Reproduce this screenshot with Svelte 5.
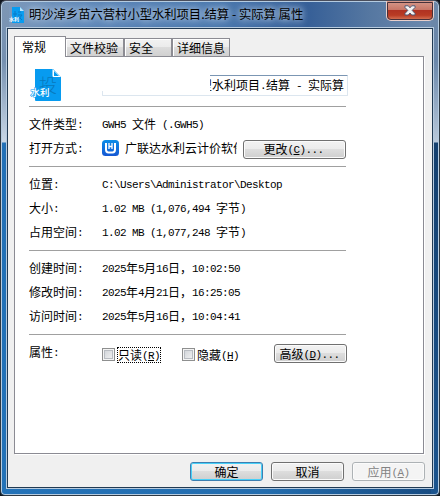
<script>
  const tabs = ['常规', '文件校验', '安全', '详细信息'];
  const location = [
    ['位置:', 'C:\\Users\\Administrator\\Desktop'],
    ['大小:', '1.02 MB (1,076,494 字节)'],
    ['占用空间:', '1.02 MB (1,077,248 字节)']
  ];
  const times = [
    ['创建时间:', '2025年5月16日，10:02:50'],
    ['修改时间:', '2025年4月21日，16:25:05'],
    ['访问时间:', '2025年5月16日，10:04:41']
  ];
  const runs = (s) => s.match(/[\x20-\x7e]+|[^\x20-\x7e]+/g) ?? [];
</script>

{#snippet mixed(s)}{#each runs(s) as r}{#if r.charCodeAt(0) < 127}<span class="half">{r}</span>{:else}{r}{/if}{/each}{/snippet}
{#snippet key(k)}<span class="half">(<u>{k}</u>)</span>{/snippet}

<div class="window">
  <header>
    <svg class="appicon" width="16" height="18" viewBox="0 0 16 18">
      <path d="M3 1h8l4 4v12H3z" fill="#079cf0" />
      <path d="M11 1v4h4z" fill="#b9e5ff" />
      <path d="M6 5v8M4 8h4M9 6h3M9 9h4l-4 5M9 10l4 4" stroke="#087ac7" fill="none" />
      <text x="0" y="14.500" font-size="5" font-weight="700" fill="#fff">水利</text>
    </svg>
    <span class="title">明沙淖乡苗六营村小型水利项目.结算 - 实际算 属性</span>
    <button class="close" aria-label="关闭">
      <svg width="12" height="11" viewBox="0 0 12 11">
        <path d="M1 .8h3.3L6 2.8 7.7.8H11v1.7L8.2 5.4 11 8.4V10H7.7L6 8 4.3 10H1V8.4l2.8-3L1 2.5z" fill="#f4f4f4" stroke="#525875" />
      </svg>
    </button>
  </header>

  <main>
    <nav>
      {#each tabs as t, i}
        <button class="tab t{i}" class:active={i === 0}>{t}</button>
      {/each}
    </nav>
    <section class="panel">
      <div class="head">
        <svg width="32" height="32" viewBox="0 0 32 32">
          <path d="M5 0h18l8 8v23q0 1-1 1H6q-1 0-1-1z" fill="#079bf0" />
          <path d="M22.500 0v7q0 1 1 1H31z" fill="#fff" />
          <path d="M24 2v5h5z" fill="#079bf0" />
          <text x="9" y="22.500" font-size="18" font-weight="300" fill="#0879bd">投</text>
          <text x="0.500" y="26.500" font-size="9.500" font-weight="500" fill="#fff" stroke="#079bf0" stroke-width="1.200" paint-order="stroke">水利</text>
        </svg>
        <div class="name">
          <span>{@render mixed('型水利项目.结算 - 实际算')}</span>
          <i></i>
        </div>
      </div>

      <div class="group">
        <div class="row"><label>{@render mixed('文件类型:')}</label><span>{@render mixed('GWH5 文件 (.GWH5)')}</span></div>
        <div class="row">
          <label>{@render mixed('打开方式:')}</label>
          <svg class="wicon" width="17" height="16" viewBox="0 0 17 16">
            <defs><linearGradient id="g" x2="0" y2="1"><stop stop-color="#0b8de8" /><stop offset="1" stop-color="#1457d3" /></linearGradient></defs>
            <rect width="17" height="16" rx="3.500" fill="url(#g)" />
            <path d="M4 3v6.500q0 3 2.500 3h4q2.500 0 2.500-3V3" fill="none" stroke="#fff" stroke-width="2" />
            <path d="M7 3v6M10 3v6M7 6.500h3" fill="none" stroke="#fff" stroke-width="1.300" />
          </svg>
          <span class="opener">广联达水利云计价软件</span>
          <button class="btn change">更改{@render key('C')}<span class="half">...</span></button>
        </div>
      </div>

      {#each [location, times] as group}
        <div class="group">
          {#each group as [l, v]}
            <div class="row"><label>{@render mixed(l)}</label><span>{@render mixed(v)}</span></div>
          {/each}
        </div>
      {/each}

      <div class="group attrs">
        <label>{@render mixed('属性:')}</label>
        <span class="box"></span>
        <span class="opt focus">只读{@render key('R')}</span>
        <span class="box second"></span>
        <span class="opt">隐藏{@render key('H')}</span>
        <button class="btn adv">高级{@render key('D')}<span class="half">...</span></button>
      </div>
    </section>
    <footer>
      <button class="btn default">确定</button>
      <button class="btn">取消</button>
      <button class="btn disabled">应用{@render key('A')}</button>
    </footer>
  </main>
</div>

<style>
  :global(body) { background: #10161e; }
  * { box-sizing: border-box; }
  .window {
    width: 440px; height: 496px; overflow: hidden;
    display: flex; flex-direction: column;
    border: 1px solid #2d3843; border-top-color: #4a4e5c; border-radius: 6px 6px 5px 5px;
    box-shadow: inset 0 0 0 1px #b5cbe0;
    font: 12px/16px "Noto Sans CJK SC", sans-serif; color: #000;
    background:
      linear-gradient(180deg, #7d97b5 0, #7590b0 60px, #c9d7e6 141px, #2270b6 142px, #2372b8 100%) left / 8px 100% no-repeat,
      linear-gradient(180deg, #6c87a8 0, #6a87aa 60px, #b8c8da 141px, #14406f 142px, #1b548e 100%) right / 8px 100% no-repeat,
      linear-gradient(90deg, #7f9abb 0, #5f88b8 20%, #4b78ae 50%, #365f97 70%, #5577a1 84%, #708caf 100%) top / 100% 30px no-repeat,
      linear-gradient(90deg, #2372b8, #236dae 60%, #174a80);
  }
  button { font: inherit; color: inherit; margin: 0; padding: 0; }
  .half {
    font-family: "Liberation Mono", monospace; font-size: 11px; line-height: 1;
    letter-spacing: -.6px; white-space: pre; vertical-align: .6px;
  }
  header { height: 27px; flex: none; display: flex; align-items: flex-start; padding-left: 8px; }
  .appicon { margin: 5px 4px 0 0; }
  .title {
    flex: 1; margin-top: 5px; white-space: nowrap; font-size: 12.300px;
    text-shadow: 0 0 6px #c3d5e9, 0 0 9px #bdd0e5;
  }
  .close {
    width: 48px; height: 20px; margin-right: 5px; display: flex; justify-content: center; align-items: center;
    border: 1px solid #e8cfcb; border-top: 0; border-radius: 0 0 5px 5px;
    outline: 1px solid #47303a; outline-offset: -2px;
    background: linear-gradient(#d79a8c 0, #c87768 45%, #b03222 50%, #b93b24 75%, #d8795a 100%);
  }
  main {
    flex: none; width: 426px; height: 460px; margin-left: 6px; padding: 7px 7px 0 6px;
    background: #f0f0f0; border: 1px solid #213a53; outline: 1px solid #b7cbdf;
  }
  nav { display: flex; align-items: flex-end; height: 20px; }
  .tab {
    height: 18px; border: 1px solid #8c8c93; border-bottom: 0; text-align: left; padding-left: 3px;
    background: linear-gradient(#f2f2f2 0, #ebebeb 48%, #dcdcdc 50%, #d0d0d0); box-shadow: inset 1px 1px #fff;
    line-height: 17px; white-space: nowrap; overflow: hidden;
  }
  .tab.active { width: 52px; height: 21px; margin-bottom: -1px; padding: 0 0 2px 7px; background: #fff; z-index: 1; }
  .t1 { width: 58px; border-left: 0; padding-left: 4px; }
  .t2 { width: 48px; padding-left: 4px; }
  .t3 { width: 58px; padding-left: 4px; }
  .panel { height: 398px; width: 410px; background: #fff; border: 1px solid #8b8b93; padding: 0 76px 0 14px; box-shadow: 1px 1px #fff; }
  .head { height: 49px; display: flex; padding-top: 12px; }
  .head svg { margin-left: 1px; flex: none; }
  .name {
    position: relative; width: 246px; height: 21px; margin: 6px -1px 0 auto; flex: none;
    border: 1px solid #dce6ef; border-top-color: #7b96b3; border-radius: 1px;
    display: flex; justify-content: flex-end; padding-right: 3px; line-height: 17px; white-space: nowrap;
  }
  .name i { position: absolute; left: -1px; top: -1px; width: 108px; height: 16px; background: #fff; }
  .group { width: 317px; border-top: 1px solid #a0a0a0; padding: 5px 0 6px; }
  .row { height: 24px; display: flex; align-items: center; white-space: nowrap; }
  label { width: 73px; flex: none; }
  .wicon { flex: none; }
  .opener { width: 112px; margin-left: 6px; overflow: hidden; }
  .btn {
    width: 73px; height: 19px; flex: none; white-space: nowrap; line-height: 16px;
    border: 1px solid #707070; border-radius: 3px; box-shadow: inset 0 0 0 1px #fbfbfb;
    background: linear-gradient(#f2f2f2 0, #ebebeb 48%, #dddddd 50%, #cfcfcf);
  }
  .change { width: 103px; margin-left: 6px; margin-top: 2px; padding-right: 2px; }
  .attrs { display: flex; align-items: flex-start; padding-top: 9px; }
  .box {
    width: 13px; height: 13px; margin-top: 4px; flex: none; border: 1px solid #8e8f8f;
    background: linear-gradient(135deg, #cbcfd5, #f6f6f6); box-shadow: inset 0 0 0 1px #f4f4f4, inset 0 0 0 2px #b8bcc2;
  }
  .second { margin-left: 21px; }
  .opt { height: 14px; line-height: 14px; margin: 4px 0 0 2px; white-space: nowrap; width: 44px; }
  .opt.focus { outline: 1px dotted #000; width: 42px; margin-left: 3px; margin-right: 1px; }
  .adv { margin-left: auto; margin-right: -1px; padding-right: 2px; }
  footer { display: flex; gap: 8px; justify-content: flex-end; padding-top: 8px; }
  .default { border-color: #3c7fb1; box-shadow: inset 0 0 0 1px #48d0f8; }
  .disabled { color: #838383; background: #f4f4f4; border-color: #adb2b5; }
</style>
